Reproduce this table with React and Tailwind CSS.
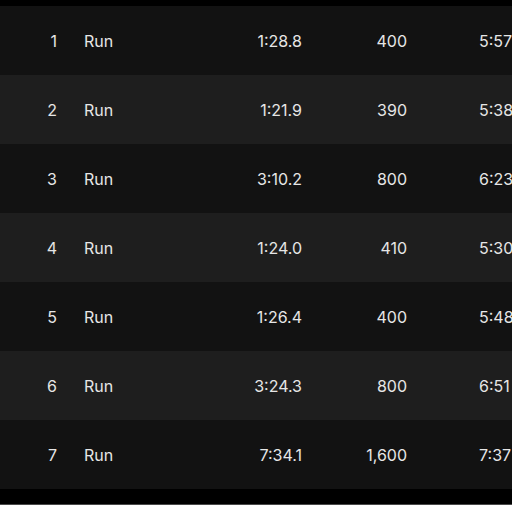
const rows = [
  ["1", "Run", "1:28.8", "400", "5:57"],
  ["2", "Run", "1:21.9", "390", "5:38"],
  ["3", "Run", "3:10.2", "800", "6:23"],
  ["4", "Run", "1:24.0", "410", "5:30"],
  ["5", "Run", "1:26.4", "400", "5:48"],
  ["6", "Run", "3:24.3", "800", "6:51"],
  ["7", "Run", "7:34.1", "1,600", "7:37"],
];

export default function App() {
  return (
    <div
      className="w-[512px] h-[505px] bg-black overflow-hidden flex flex-col text-[#e6e6e6] text-[16px]"
      style={{ fontFamily: "Inter, 'Liberation Sans', sans-serif" }}
    >
      <div className="h-[6px] shrink-0" />
      {rows.map((r, i) => (
        <div
          key={i}
          className={`h-[69px] shrink-0 flex items-center whitespace-nowrap overflow-hidden ${
            i % 2 === 0 ? "bg-[#121212]" : "bg-[#1e1e1e]"
          }`}
        >
          <div className="w-[57px] shrink-0 text-right">{r[0]}</div>
          <div className="w-[150px] shrink-0 ml-[27px]">{r[1]}</div>
          <div className="w-[68px] shrink-0 text-right">{r[2]}</div>
          <div className="w-[105px] shrink-0 text-right">{r[3]}</div>
          <div className="shrink-0 pl-[72px]">{r[4]}</div>
        </div>
      ))}
      <div className="h-[15px] shrink-0" />
      <div className="h-[1px] shrink-0 bg-[#4a4a4a]" />
    </div>
  );
}
